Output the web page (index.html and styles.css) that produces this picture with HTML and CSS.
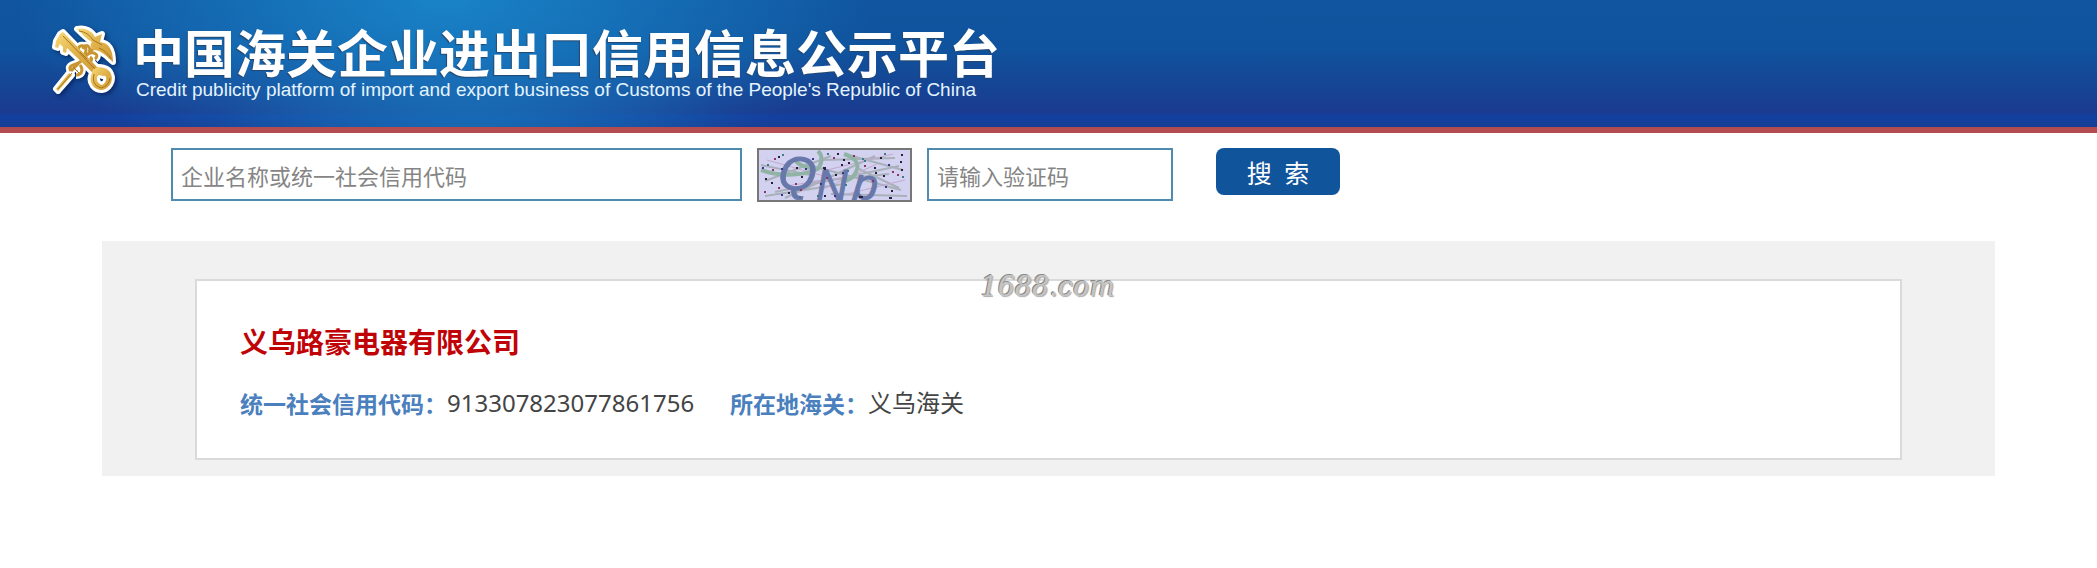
FILE: index.html
```html
<!DOCTYPE html>
<html lang="zh-CN">
<head>
<meta charset="utf-8">
<title>中国海关企业进出口信用信息公示平台</title>
<link rel="stylesheet" href="styles.css">
</head>
<body>
<header class="banner">
  <svg class="emblem" viewBox="0 0 72 74" aria-hidden="true">
    <defs>
      <linearGradient id="gold" x1="0" y1="0" x2="1" y2="1">
        <stop offset="0" stop-color="#f6da78"/>
        <stop offset="0.5" stop-color="#e0b24a"/>
        <stop offset="1" stop-color="#cf9a35"/>
      </linearGradient>
      <g id="emblem-shape">
        <path d="M11 11 14 9 49 45 44 50 18 25 17 30 14 29 14 24 11 21 9 25 6 24 7 18Z"/>
        <path fill-rule="evenodd" d="M44 46C50 42 60 45 62 51 65 58 60 66 53 67 45 67 40 60 42 53ZM50 52C46 54 48 61 53 62 59 59 58 51 54 53Z"/>
        <path d="M28 6C36 4 43 8 46 14L53 11 51 19C60 20 64 27 64 39 58 34 54 28 45 27 41 25 41 21 43 19 38 16 35 13 28 6Z"/>
        <path d="M7 66 20 50 23 52 9 68Z"/>
      </g>
      <path id="emblem-snakes" d="M22 48C17 41 30 42 32 38 35 32 27 31 29 26 31 21 37 22 37 27 37 33 30 36 37 39 42 41 44 36 41 34M27 52C34 52 34 45 31 42M34 26C36 19 43 24 40 29M22 48 44 26M39 31C45 28 51 32 46 36"/>
    </defs>
    <g class="emblem-edge">
      <use href="#emblem-shape"/>
      <use href="#emblem-snakes" class="emblem-snakes-edge"/>
    </g>
    <use href="#emblem-snakes" class="emblem-snakes"/>
    <use href="#emblem-shape" fill="url(#gold)"/>
    <g class="emblem-detail">
      <path d="M14 13 46 46M30 8Q39 9 44 17L53 22M50 25Q58 28 62 36M9 66 23 50M45 51Q42 62 52 65Q60 63 61 55M24 44 30 50M31 29 38 36"/>
    </g>
  </svg>
  <div class="banner-text">
    <h1 class="banner-title">中国海关企业进出口信用信息公示平台</h1>
    <p class="banner-subtitle">Credit publicity platform of import and export business of Customs of the People's Republic of China</p>
  </div>
</header>
<main>
  <form class="search">
    <input class="field field-name" type="text" aria-label="企业名称或统一社会信用代码" placeholder="企业名称或统一社会信用代码">
    <svg class="captcha" viewBox="0 0 155 54" role="img" aria-label="验证码图片">
      <rect width="155" height="54" fill="#d2d2f0"/>
      <g fill="none" stroke="#a9b0ba" stroke-width="2">
        <path d="M4 17 58 28M8 33 74 8M18 44 142 18M28 50 118 8M48 16 144 42M66 12 138 10M74 46 150 48M88 6 146 22M54 34 132 26M8 48 86 36M100 20 142 40"/>
      </g>
      <g fill="none" stroke="#c3a9ce" stroke-width="1">
        <path d="M10 12 74 30M70 22 136 6M28 38 98 28M90 46 148 32M64 42 120 16"/>
      </g>
      <g fill="none" stroke="#91b3a5" stroke-width="4">
        <path d="M4 22Q34 32 61 21Q68 10 61 3M87 6Q105 12 99 24Q96 32 84 34M37 10Q42 20 59 20"/>
      </g>
      <g class="captcha-letters">
        <text x="22" y="42" font-size="48" transform="rotate(8 38 25)">Q</text>
        <text x="59" y="53" font-size="44">N</text>
        <text x="96" y="51" font-size="44" transform="rotate(6 105 42)">p</text>
      </g>
      <g fill="none" stroke-width="2">
        <path stroke="#26203c" d="M21 9h2M39 20h2M44 29h2M66 20h2v2M80 6h2M86 12h2M91 15h2M84 17h2M78 27h2M117 20h2M118 25h2M126 28h2M123 10h2M143 14h2M144 22h2M8 31h2M14 35h2M31 45h2M102 49h4M132 50h3M87 53h2M19 53h2M134 43h2M144 7h2M67 48h2"/>
        <path stroke="#8c3468" d="M17 11h2M7 44h2M15 22h2M38 36h2M69 30h2M96 8h2M115 33h2M140 27h2M43 42h2M107 18h2M135 24h2M76 10h2M21 40h2"/>
        <path stroke="#3b7c8c" d="M25 7h2M10 17h2M105 11h2M107 13h2M90 23h2M127 6h2M60 48h2M145 29h2M42 49h2M88 37h2M70 6h2"/>
        <path stroke="#3a348c" d="M5 20h2M24 21h2M48 21h2M63 36h2M77 48h2M85 25h2M131 17h2M24 47h2M128 39h2M55 11h2"/>
      </g>
      <rect x="1" y="1" width="153" height="52" fill="none" stroke="#777" stroke-width="2"/>
    </svg>
    <input class="field field-code" type="text" aria-label="请输入验证码" placeholder="请输入验证码">
    <button class="submit" type="button">搜&ensp;索</button>
  </form>
  <section class="results">
    <article class="card">
      <span class="watermark">1688.com</span>
      <h2 class="company">义乌路豪电器有限公司</h2>
      <dl class="facts">
        <div class="fact"><dt>统一社会信用代码：</dt><dd>913307823077861756</dd></div>
        <div class="fact"><dt>所在地海关：</dt><dd>义乌海关</dd></div>
      </dl>
    </article>
  </section>
</main>
</body>
</html>
```
FILE: styles.css
```css
* {
  box-sizing: border-box;
}

body {
  margin: 0;
  background: #fff;
  color: #444;
  font-family: "Noto Sans", "Noto Sans CJK SC", sans-serif;
}

h1, h2, p, dl, dd {
  margin: 0;
}

.banner {
  display: flex;
  align-items: flex-start;
  gap: 12px;
  padding: 23px 49px;
  min-height: 133px;
  border-bottom: 6px solid #b34b50;
  background:
    radial-gradient(ellipse 430px 190px at 445px 0, rgba(27, 139, 207, 0.85), rgba(27, 139, 207, 0)),
    radial-gradient(ellipse 260px 90px at 475px 127px, rgba(22, 110, 180, 0.6), rgba(22, 110, 180, 0)),
    linear-gradient(#10559f 0%, #10529d 40%, #1a3b8f 88%, #1340a0 92%, #173e94 100%);
}

.emblem {
  flex: none;
  width: 72px;
  height: 74px;
  overflow: visible;
  filter: drop-shadow(2px 2px 2px rgba(0, 20, 70, 0.6));
}

.emblem-edge {
  fill: #fff;
  stroke: #fff;
  stroke-width: 6;
  stroke-linejoin: round;
}

.emblem-snakes-edge {
  stroke-width: 8;
}

.emblem-snakes {
  fill: none;
  stroke: #c99530;
  stroke-width: 3;
}

.emblem-detail {
  fill: none;
  stroke: #a87420;
  stroke-width: 1;
}

.banner-title {
  color: #fff;
  font-family: "Noto Sans CJK SC", sans-serif;
  font-size: 51px;
  font-weight: 700;
  line-height: 56px;
  text-shadow: -1px 1px 1px #24476f;
}

.banner-subtitle {
  padding-left: 3px;
  color: #e4f4ff;
  font-family: "Liberation Sans", Arial, sans-serif;
  font-size: 19px;
  line-height: 22px;
}

.search {
  display: flex;
  align-items: flex-start;
  padding: 15px 171px 39px;
}

.field {
  min-width: 0;
  height: 53px;
  padding: 0 8px;
  border: 2px solid #4f8baf;
  border-radius: 0;
  background: #fff;
  color: #444;
  font-family: "Noto Sans CJK SC", sans-serif;
  font-size: 22px;
}

.field::placeholder {
  color: #858585;
  opacity: 1;
}

.field-name {
  width: 571px;
}

.field-code {
  width: 246px;
}

.captcha {
  flex: none;
  width: 155px;
  height: 54px;
  margin: 0 15px;
}

.captcha-letters {
  fill: #6878ab;
  stroke: #6878ab;
  stroke-width: 1;
  font-family: "Liberation Sans", Arial, sans-serif;
  font-style: italic;
}

.submit {
  flex: none;
  width: 124px;
  height: 47px;
  margin-left: 43px;
  padding: 0;
  border: 0;
  border-radius: 8px;
  background: #10549c;
  color: #fff;
  font-family: "Noto Sans CJK SC", sans-serif;
  font-size: 25px;
}

.results {
  margin: 0 102px;
  padding: 38px 93px 16px;
  background: #f1f1f1;
}

.card {
  position: relative;
  padding: 38px 43px 35px;
  border: 2px solid #dadada;
  background: #fff;
}

.watermark {
  position: absolute;
  top: -10px;
  left: 50%;
  margin-left: -68px;
  color: #c4c4c4;
  font-family: "DejaVu Serif", serif;
  font-size: 27px;
  font-style: italic;
  line-height: 32px;
  text-shadow: -1px -1px 0 #888, 1px 1px 1px #aaa;
}

.company {
  color: #c00306;
  font-family: "Noto Sans CJK SC", sans-serif;
  font-size: 28px;
  font-weight: 700;
  line-height: 44px;
}

.facts {
  display: flex;
  flex-wrap: wrap;
  gap: 0 36px;
  padding-top: 20px;
}

.fact {
  display: flex;
  align-items: center;
  line-height: 40px;
}

.fact dt {
  color: #4a80bd;
  font-family: "Noto Sans CJK SC", sans-serif;
  font-size: 23px;
  font-weight: 700;
}

.fact dd {
  font-size: 24px;
}
```
